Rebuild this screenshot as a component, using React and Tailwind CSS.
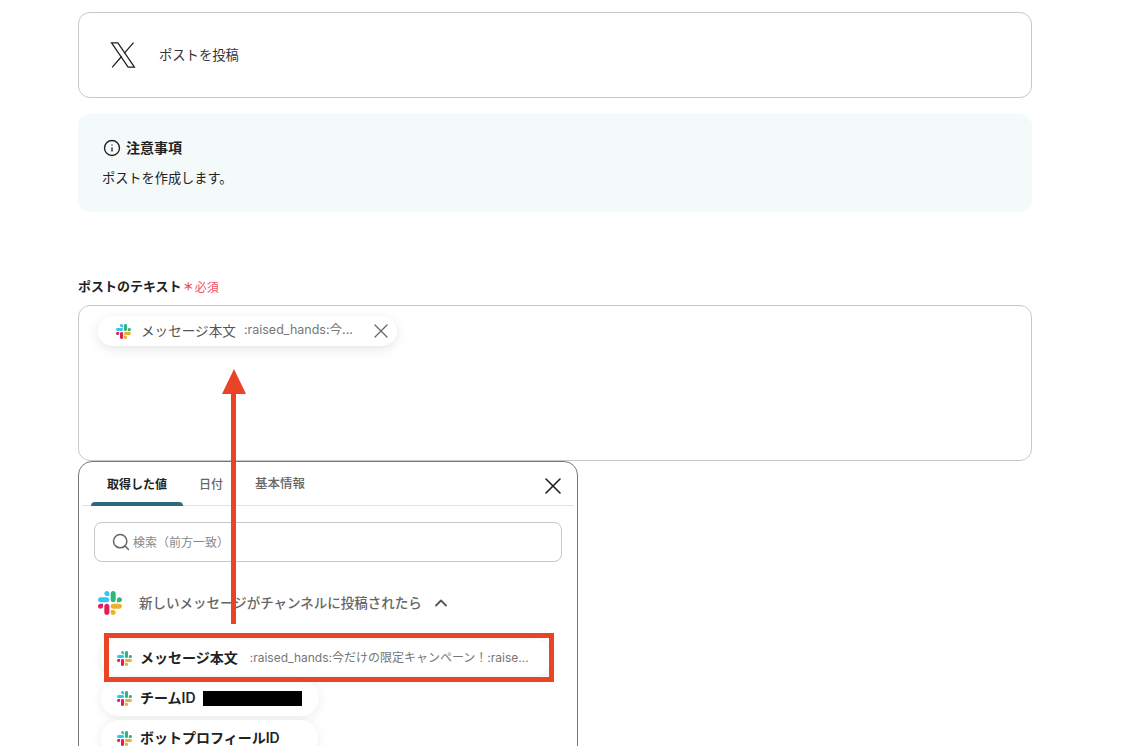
import { X, Search, ChevronUp, Info } from 'lucide-react';

const FONT = "font-['Inter','Noto_Sans_CJK_JP',sans-serif]";

function SlackLogo({ className }) {
  return (
    <svg viewBox="0 0 122.8 122.8" className={className}>
      <path d="M25.8 77.6c0 7.1-5.8 12.9-12.9 12.9S0 84.7 0 77.6s5.8-12.9 12.9-12.9h12.9v12.9zm6.5 0c0-7.1 5.8-12.9 12.9-12.9s12.9 5.8 12.9 12.9v32.3c0 7.1-5.8 12.9-12.9 12.9s-12.9-5.8-12.9-12.9V77.6z" fill="#e01e5a" />
      <path d="M45.2 25.8c-7.1 0-12.9-5.8-12.9-12.9S38.1 0 45.2 0s12.9 5.8 12.9 12.9v12.9H45.2zm0 6.5c7.1 0 12.9 5.8 12.9 12.9s-5.8 12.9-12.9 12.9H12.9C5.8 58.1 0 52.3 0 45.2s5.8-12.9 12.9-12.9h32.3z" fill="#36c5f0" />
      <path d="M97 45.2c0-7.1 5.8-12.9 12.9-12.9s12.9 5.8 12.9 12.9-5.8 12.9-12.9 12.9H97V45.2zm-6.5 0c0 7.1-5.8 12.9-12.9 12.9s-12.9-5.8-12.9-12.9V12.9C64.7 5.8 70.5 0 77.6 0s12.9 5.8 12.9 12.9v32.3z" fill="#2eb67d" />
      <path d="M77.6 97c7.1 0 12.9 5.8 12.9 12.9s-5.8 12.9-12.9 12.9-12.9-5.8-12.9-12.9V97h12.9zm0-6.5c-7.1 0-12.9-5.8-12.9-12.9s5.8-12.9 12.9-12.9h32.3c7.1 0 12.9 5.8 12.9 12.9s-5.8 12.9-12.9 12.9H77.6z" fill="#ecb22e" />
    </svg>
  );
}

// thin outlined X mark
function XLogo() {
  return (
    <svg viewBox="0 0 24 24" className="w-[28px] h-[28px] text-[#222]" fill="none" stroke="currentColor" strokeWidth="1.1">
      <path d="M2.2 1.6h5.4l14.2 20.8h-5.4z" />
      <path d="M21 1.4l-8 9.2M10.9 13.1l-8.2 9.5" />
    </svg>
  );
}

// pill in the value list
function ValuePill({ label, children, className }) {
  return (
    <div className={`flex items-center h-[36px] pl-[16px] rounded-full bg-white shadow-[0_2px_12px_rgba(0,0,0,0.08)] ${className}`}>
      <SlackLogo className="w-[15px] h-[15px] shrink-0" />
      <span className="ml-[8px] pb-[1px] text-[14px] font-semibold text-[#222] whitespace-nowrap">{label}</span>
      {children}
    </div>
  );
}

export default function App() {
  return (
    <div className={`relative h-[746px] overflow-hidden bg-white ${FONT}`}>
      <div className="ml-[78px] w-[954px] pt-[12px]">
        {/* action card */}
        <div className="flex items-center h-[86px] pl-[30px] border border-[#c8c8c8] rounded-[12px]">
          <XLogo />
          <span className="ml-[22px] pt-[1px] text-[13.3px] text-[#333]">ポストを投稿</span>
        </div>

        {/* notice */}
        <div className="mt-[16px] h-[98px] rounded-[12px] bg-[#f4f9fa] pl-[24px] pt-[23px]">
          <div className="flex items-center gap-[5px] pl-[1px]">
            <Info className="w-[18px] h-[18px] text-[#222]" strokeWidth={1.8} />
            <span className="text-[14px] font-semibold text-[#222]">注意事項</span>
          </div>
          <p className="mt-[10px] text-[13.2px] leading-[20px] text-[#222]">ポストを作成します。</p>
        </div>

        {/* field */}
        <div className="mt-[66px] flex items-center h-[18px]">
          <span className="text-[13px] font-semibold text-[#222]">ポストのテキスト</span>
          <span className="ml-[1px] pt-[1px] text-[11px] font-bold text-[#ef5463]">＊</span>
          <span className="ml-[1px] pt-[1px] text-[12px] text-[#ef5463]">必須</span>
        </div>
        <div className="mt-[9px] h-[156px] border border-[#c8c8c8] rounded-[12px] pl-[19px] pt-[10px]">
          <div className="flex items-center w-[299px] h-[30px] pl-[18px] rounded-full bg-white shadow-[0_3px_12px_rgba(0,0,0,0.1)]">
            <SlackLogo className="w-[15px] h-[15px] shrink-0" />
            <span className="ml-[10px] pb-[1px] text-[13.6px] leading-[26px] text-[#555] whitespace-nowrap">メッセージ本文</span>
            <span className="ml-[8px] pb-[1px] text-[12.5px] text-[#777] whitespace-nowrap">:raised_hands:今...</span>
            <X className="ml-auto mr-[4px] w-[24px] h-[24px] text-[#666]" strokeWidth={1.3} />
          </div>
        </div>

        {/* picker popup */}
        <div className="w-[500px] h-[300px] border border-[#777] rounded-[14px] bg-white overflow-hidden">
          <div className="relative flex h-[44px] mx-[3px] border-b border-[#e2e2e2]">
            <div className="relative w-[92px] ml-[9px] pt-[2px] flex items-center justify-center text-[12px] font-semibold text-[#222]">
              取得した値
              <div className="absolute left-0 right-0 bottom-[-1px] h-[4px] rounded-t-[4px] bg-[#2c6a80]" />
            </div>
            <div className="ml-[16px] pt-[2px] flex items-center text-[12px] font-medium text-[#666]">日付</div>
            <div className="ml-[32px] pt-[2px] flex items-center text-[12.5px] font-medium text-[#666]">基本情報</div>
            <X className="absolute right-[7px] top-[10px] w-[28px] h-[28px] text-[#222]" strokeWidth={1.4} />
          </div>

          <div className="mx-[15px] mt-[16px] flex items-center h-[40px] border border-[#c8c8c8] rounded-[8px] pl-[16px]">
            <Search className="w-[20px] h-[20px] text-[#666]" strokeWidth={1.8} />
            <span className="ml-[2px] pt-[1px] text-[12px] text-[#888]">検索（前方一致）</span>
          </div>

          <div className="mt-[28px] ml-[19px] flex items-center h-[26px]">
            <SlackLogo className="w-[24px] h-[24px]" />
            <span className="ml-[17px] text-[13.5px] font-medium text-[#666]">新しいメッセージがチャンネルに投稿されたら</span>
            <ChevronUp className="ml-[9px] w-[20px] h-[20px] text-[#555]" strokeWidth={2.2} />
          </div>

          <div className="mt-[24px] ml-[22px] flex flex-col gap-[4px]">
            <ValuePill label="メッセージ本文" className="w-[450px] relative">
              <span className="ml-[12px] text-[12px] text-[#777] whitespace-nowrap">:raised_hands:今だけの限定キャンペーン！:raise...</span>
            </ValuePill>
            <ValuePill label="チームID" className="w-[218px]">
              <div className="ml-[7px] w-[99px] h-[15px] bg-black" />
            </ValuePill>
            <ValuePill label="ボットプロフィールID" className="w-[217px]" />
          </div>
        </div>
      </div>

      {/* red annotation arrow and box */}
      <div className="absolute left-[231px] top-[392px] w-[5px] h-[232px] bg-[#e94426]" />
      <div className="absolute left-[222px] top-[369px] w-0 h-0 border-x-[12px] border-x-transparent border-b-[25px] border-b-[#e94426]" />
      <div className="absolute left-[104px] top-[633px] w-[450px] h-[49px] border-[5px] border-[#e94426]" />
    </div>
  );
}
